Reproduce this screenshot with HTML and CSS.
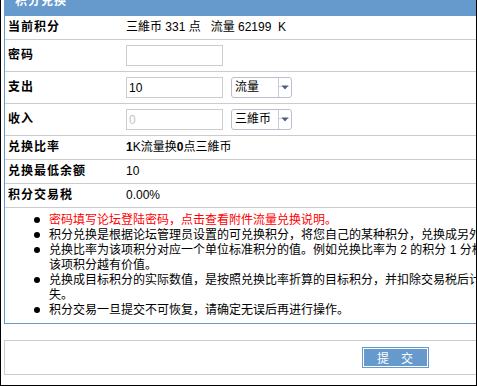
FILE: index.html
```html
<!DOCTYPE html>
<html lang="zh-CN">
<head>
    <meta charset="UTF-8">
    <title>积分兑换</title>
    <link rel="stylesheet" href="styles.css">
</head>
<body>
<div class="frame">
    <div class="box">
        <div class="box-title">积分兑换</div>
        <table class="form-table">
            <colgroup>
                <col class="col-label">
                <col>
            </colgroup>
            <tr>
                <th>当前积分</th>
                <td>三維币 331 点&nbsp;&nbsp; 流量 62199&nbsp; K</td>
            </tr>
            <tr class="input-row">
                <th>密码</th>
                <td>
                    <div class="field">
                        <input type="password" class="txt">
                    </div>
                </td>
            </tr>
            <tr class="input-row">
                <th>支出</th>
                <td>
                    <div class="field">
                        <input type="text" class="txt" value="10">
                        <div class="sel">
                            <span class="sel-text">流量</span>
                            <span class="sel-btn"><svg width="12" height="19" viewBox="0 0 12 19"><rect x="0" y="8" width="10" height="1" fill="#c6c6ee"/><path d="M2.5 7.5h7l-3.5 4z" fill="#4e5a8a"/></svg></span>
                        </div>
                    </div>
                </td>
            </tr>
            <tr class="input-row">
                <th>收入</th>
                <td>
                    <div class="field">
                        <input type="text" class="txt" value="0" disabled>
                        <div class="sel">
                            <span class="sel-text">三維币</span>
                            <span class="sel-btn"><svg width="12" height="19" viewBox="0 0 12 19"><rect x="0" y="8" width="10" height="1" fill="#c6c6ee"/><path d="M2.5 7.5h7l-3.5 4z" fill="#4e5a8a"/></svg></span>
                        </div>
                    </div>
                </td>
            </tr>
            <tr>
                <th>兑换比率</th>
                <td><b>1</b>K流量换<b>0</b>点三維币</td>
            </tr>
            <tr>
                <th>兑换最低余额</th>
                <td>10</td>
            </tr>
            <tr>
                <th>积分交易税</th>
                <td>0.00%</td>
            </tr>
            <tr>
                <td colspan="2" class="notes">
                    <ul>
                        <li class="tip-red">密码填写论坛登陆密码，点击查看附件流量兑换说明。</li>
                        <li>积分兑换是根据论坛管理员设置的可兑换积分，将您自己的某种积分，兑换成另外一种积分。</li>
                        <li>兑换比率为该项积分对应一个单位标准积分的值。例如兑换比率为 2 的积分 1 分相当于标准积分 2 分，比率越高，<br>该项积分越有价值。</li>
                        <li>兑换成目标积分的实际数值，是按照兑换比率折算的目标积分，并扣除交易税后计算得出，请仔细确认以免造成损<br>失。</li>
                        <li>积分交易一旦提交不可恢复，请确定无误后再进行操作。</li>
                    </ul>
                </td>
            </tr>
        </table>
    </div>

    <div class="btn-bar">
        <button type="submit" class="submit">提　交</button>
    </div>
</div>
</body>
</html>
```

FILE: styles.css
```css
* {
    margin: 0;
    padding: 0;
    box-sizing: border-box;
}

body {
    font-family: "Liberation Sans", "Noto Sans CJK SC", sans-serif;
    font-size: 12px;
    color: #000;
    background: #fff;
}

/* window frame, content is wider than the window and gets clipped */
.frame {
    width: 477px;
    height: 386px;
    border: 1px solid #000;
    border-top: none;
    padding-left: 3px;
    overflow: hidden;
}

.box {
    width: 782px;
    margin-top: -9px;
    border: 1px solid #69c;
}

.box-title {
    height: 24px;
    line-height: 18px;
    padding-left: 10px;
    background: #69c;
    color: #fff;
    font-weight: bold;
    letter-spacing: 1px;
}

.form-table {
    width: 100%;
    border-collapse: separate;
    border-spacing: 0;
    table-layout: fixed;
}

.col-label {
    width: 118px;
}

.form-table th,
.form-table td {
    border-bottom: 1px solid #ccc;
    padding: 4px 3px;
    line-height: 15px;
    text-align: left;
    vertical-align: middle;
}

.form-table th {
    font-weight: bold;
    letter-spacing: 1px;
}

.input-row th,
.input-row td {
    padding-top: 5px;
    padding-bottom: 5px;
}

.field {
    display: flex;
    align-items: center;
    gap: 8px;
    height: 21px;
}

.txt {
    width: 97px;
    height: 21px;
    padding: 0 2px;
    border: 1px solid #ccc;
    font: inherit;
    color: #000;
    background: #fff;
    outline: none;
}

.txt:disabled {
    color: #c4c4c4;
    background: #fff;
    border-color: #ccc;
}

.sel {
    display: flex;
    width: 61px;
    height: 21px;
    border: 1px solid #bdbecb;
    border-radius: 3px;
    overflow: hidden;
    background: #fff;
}

.sel-text {
    flex: 1;
    padding-left: 3px;
    line-height: 19px;
    white-space: nowrap;
}

.sel-btn {
    width: 13px;
    border-left: 1px solid #c9cad8;
    display: flex;
}

.form-table td.notes {
    border-bottom: none;
    padding: 5px 0;
}

.notes ul {
    padding-left: 44px;
    list-style: none;
    white-space: nowrap;
}

.notes li {
    position: relative;
    line-height: 15px;
}

.notes li::before {
    content: "";
    position: absolute;
    left: -15px;
    top: 4px;
    width: 6px;
    height: 6px;
    border-radius: 50%;
    background: #000;
}

.tip-red {
    color: #f00;
}

.btn-bar {
    width: 782px;
    margin-top: 16px;
    padding: 6px 0;
    border: 1px solid #ccc;
    display: flex;
    justify-content: center;
}

.submit {
    width: 67px;
    height: 21px;
    border: 1px solid #69c;
    box-shadow: inset 0 0 0 1px #fff;
    background: #69c;
    color: #fff;
    font: inherit;
    cursor: pointer;
}
```
